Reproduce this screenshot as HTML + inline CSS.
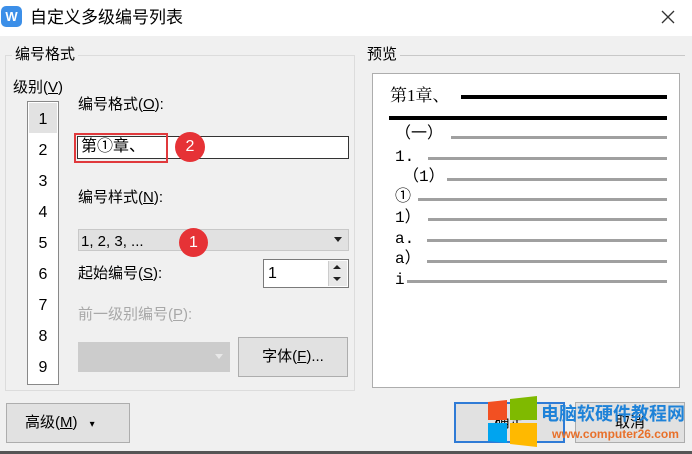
<!DOCTYPE html>
<html><head><meta charset="utf-8"><style>
*{margin:0;padding:0;box-sizing:border-box}
body{width:692px;height:454px;background:#f0f0f0;position:relative;overflow:hidden;font-family:"Liberation Sans","Noto Sans CJK SC",sans-serif;color:#000;font-size:15px}
.a{position:absolute;white-space:nowrap}
.t{line-height:1}
.gl{position:absolute;height:3px;background:#a0a0a0;right:26px}
.lb{position:absolute;font-family:"Liberation Mono","Noto Sans CJK SC",monospace;font-size:16px;line-height:1}
u{text-decoration:underline}
</style></head><body>
<div class="a" style="left:0;top:0;width:692px;height:36px;background:#fff"></div>
<div class="a" style="left:1px;top:6px;width:21px;height:21px;background:#3c8fe8;border-radius:5px;color:#fff;font-size:13px;font-weight:bold;text-align:center;line-height:21px">W</div>
<div class="a t" style="left:30px;top:9px;font-size:17px">自定义多级编号列表</div>
<svg class="a" style="left:660px;top:9px" width="16" height="16"><path d="M2 2L14 14M14 2L2 14" stroke="#333" stroke-width="1.3"/></svg>

<div class="a" style="left:5px;top:55px;width:350px;height:336px;border:1px solid #dcdcdc"></div>
<div class="a t" style="left:12px;top:47px;font-size:15px;background:#f0f0f0;padding:0 3px">编号格式</div>
<div class="a t" style="left:13px;top:80px">级别(<u>V</u>)</div>
<div class="a" style="left:27px;top:101px;width:32px;height:284px;background:#fff;border:1px solid #888"></div>
<div class="a" style="left:29px;top:103px;width:28px;height:30px;background:#e2e2e2"></div>
<div class="a" style="left:27px;top:104px;width:32px;font-size:16px;text-align:center;line-height:31px">1<br>2<br>3<br>4<br>5<br>6<br>7<br>8<br>9</div>

<div class="a t" style="left:78px;top:97px">编号格式(<u>O</u>):</div>
<div class="a" style="left:77px;top:136px;width:272px;height:23px;background:#fff;border:1px solid #333"></div>
<div class="a t" style="left:81px;top:139px;font-size:16px">第①章、</div>
<div class="a" style="left:74px;top:133px;width:94px;height:30px;border:2px solid #e0393c"></div>
<div class="a" style="left:175px;top:132px;width:30px;height:30px;border-radius:50%;background:#e63236;color:#fff;text-align:center;line-height:30px;font-size:16px">2</div>

<div class="a t" style="left:78px;top:190px">编号样式(<u>N</u>):</div>
<div class="a" style="left:78px;top:229px;width:271px;height:22px;background:#e1e1e1;border:1px solid #c8c8c8"></div>
<div class="a t" style="left:81px;top:234px">1, 2, 3, ...</div>
<svg class="a" style="left:334px;top:237px" width="8" height="6"><path d="M0 0H8L4 5Z" fill="#222"/></svg>
<div class="a" style="left:179px;top:228px;width:29px;height:29px;border-radius:50%;background:#e63236;color:#fff;text-align:center;line-height:29px;font-size:16px">1</div>

<div class="a t" style="left:78px;top:266px">起始编号(<u>S</u>):</div>
<div class="a" style="left:263px;top:259px;width:86px;height:29px;background:#fff;border:1px solid #7a7a7a"></div>
<div class="a t" style="left:268px;top:266px;font-size:16px">1</div>
<div class="a" style="left:328px;top:261px;width:19px;height:25px;background:#e8e8e8;border-left:1px solid #ccc"></div>
<svg class="a" style="left:333px;top:264px" width="9" height="20"><path d="M0 5H8L4 1Z M0 13H8L4 17Z" fill="#222"/></svg>

<div class="a t" style="left:78px;top:307px;color:#a8a8a8">前一级别编号(<u>P</u>):</div>
<div class="a" style="left:78px;top:342px;width:152px;height:30px;background:#cccccc"></div>
<svg class="a" style="left:215px;top:354px" width="8" height="6"><path d="M0 0H8L4 5Z" fill="#e8e8e8"/></svg>
<div class="a" style="left:238px;top:337px;width:110px;height:40px;background:#e1e1e1;border:1px solid #adadad;text-align:center;line-height:38px">字体(<u>F</u>)...</div>

<div class="a" style="left:6px;top:403px;width:124px;height:40px;background:#e1e1e1;border:1px solid #adadad;line-height:38px;padding-left:18px">高级(<u>M</u>) <span style="font-size:10px;margin-left:8px">▾</span></div>

<div class="a" style="left:365px;top:55px;width:320px;height:1px;background:#c8c8c8"></div>
<div class="a t" style="left:364px;top:47px;background:#f0f0f0;padding:0 3px">预览</div>
<div class="a" style="left:372px;top:73px;width:308px;height:315px;background:#fff;border:1px solid #adadad">
<div class="a t" style="left:17px;top:13px;font-size:17px;font-family:'Liberation Serif','Noto Serif CJK SC',serif">第1章、</div>
<div class="a" style="left:88px;top:21px;right:12px;height:4px;background:#000"></div>
<div class="a" style="left:16px;top:42px;right:12px;height:4px;background:#000"></div>
<div class="lb" style="left:22px;top:52px">（一）</div><div class="gl" style="left:78px;top:62px;right:12px"></div>
<div class="lb" style="left:22px;top:75px">1.</div><div class="gl" style="left:55px;top:83px;right:12px"></div>
<div class="lb" style="left:30px;top:95px">（1）</div><div class="gl" style="left:74px;top:104px;right:12px"></div>
<div class="lb" style="left:22px;top:115px">①</div><div class="gl" style="left:45px;top:124px;right:12px"></div>
<div class="lb" style="left:22px;top:136px">1）</div><div class="gl" style="left:55px;top:144px;right:12px"></div>
<div class="lb" style="left:22px;top:157px">a.</div><div class="gl" style="left:54px;top:165px;right:12px"></div>
<div class="lb" style="left:22px;top:177px">a）</div><div class="gl" style="left:54px;top:186px;right:12px"></div>
<div class="lb" style="left:22px;top:198px">i</div><div class="gl" style="left:34px;top:206px;right:12px"></div>
</div>

<div class="a" style="left:454px;top:402px;width:111px;height:41px;background:#e1e1e1;border:2px solid #2f7bd6;text-align:center;line-height:37px">确定</div>
<div class="a" style="left:575px;top:402px;width:110px;height:41px;background:#e1e1e1;border:1px solid #adadad;text-align:center;line-height:39px">取消</div>
<svg class="a" style="left:487px;top:396px" width="52" height="52"><path d="M1 6L20 4V24H1Z" fill="#f25022"/><path d="M23 3L50 0V24H23Z" fill="#7fba00"/><path d="M1 27H20V47L1 45Z" fill="#00a4ef"/><path d="M23 27H50V51L23 48Z" fill="#ffb900"/></svg>
<div class="a t" style="left:541px;top:405px;font-size:18px;font-weight:bold;color:#1e82d8">电脑软硬件教程网</div>
<div class="a t" style="left:552px;top:428px;font-size:12px;font-weight:bold;color:#e8702a">www.computer26.com</div>
<div class="a" style="left:0;top:451px;width:692px;height:3px;background:#555"></div>
</body></html>
